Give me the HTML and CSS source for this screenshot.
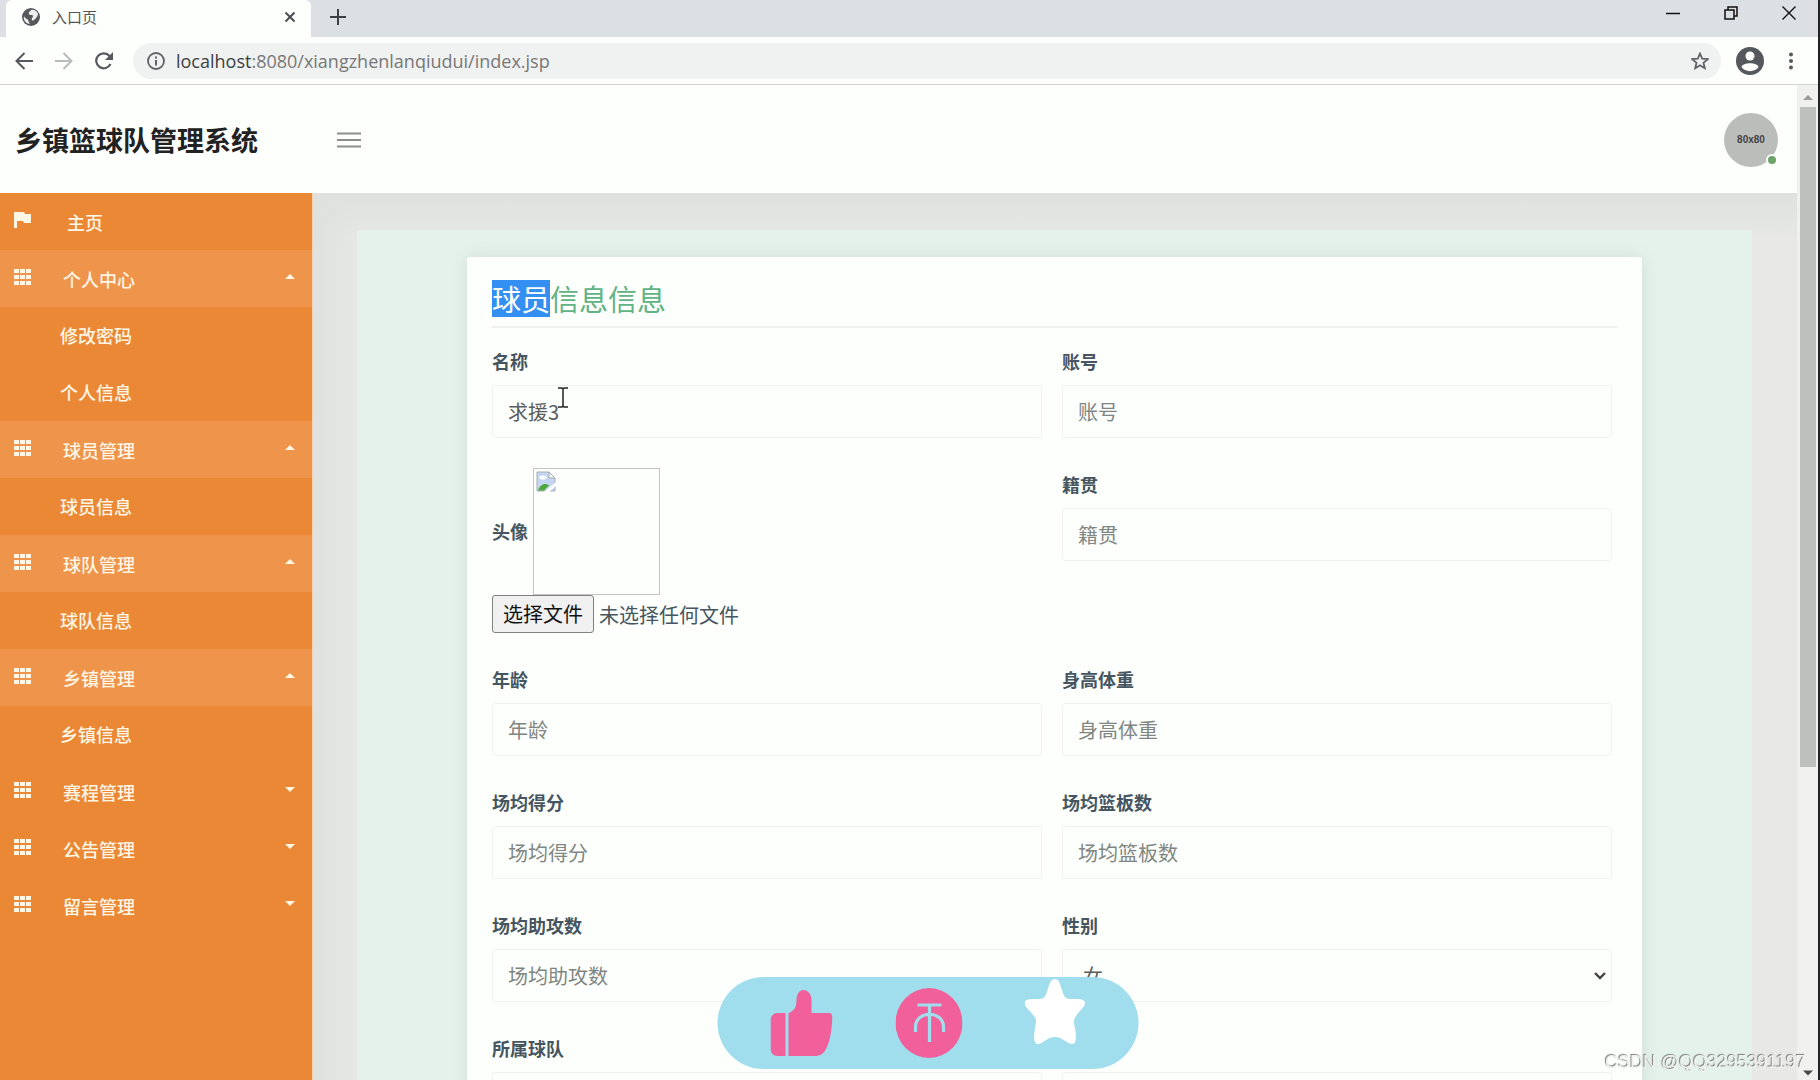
FILE: index.html
```html
<!DOCTYPE html>
<html lang="zh-CN">
<head>
<meta charset="utf-8">
<title>入口页</title>
<link rel="stylesheet" href="styles.css">
</head>
<body>
<svg class="defs" aria-hidden="true">
  <symbol id="grid" viewBox="0 0 17 16"><path d="M0 0h5v4H0zM6 0h5v4H6zM12 0h5v4h-5zM0 6h5v4H0zM6 6h5v4H6zM12 6h5v4h-5zM0 12h5v4H0zM6 12h5v4H6zM12 12h5v4h-5z"/></symbol>
  <symbol id="up" viewBox="0 0 10 5"><path d="M0 5 5 0l5 5z"/></symbol>
  <symbol id="down" viewBox="0 0 10 5"><path d="M0 0h10L5 5z"/></symbol>
</svg>

<div class="tabstrip">
  <div class="tab">
    <svg class="globe" viewBox="0 0 18 18"><circle cx="9" cy="9" r="9" fill="#55595d"/><path d="M2 8c1 3 3 2 4 4s1 3 2 4c-4 0-7-4-6-8zM9 2c-1 2-3 2-2 4s4 0 4 2-2 2-1 4 3-1 4-2 2-3 2-4c-1-3-4-5-7-4z" fill="#eceeef"/></svg>
    <span class="tab-title">入口页</span>
    <button class="icon-btn" aria-label="关闭标签页"><svg width="12" height="12" viewBox="0 0 12 12"><path d="M1.500 1.500l9 9m0-9l-9 9" stroke="#4a4d50" stroke-width="2"/></svg></button>
  </div>
  <button class="icon-btn new-tab" aria-label="新标签页"><svg width="16" height="16" viewBox="0 0 16 16"><path d="M8 0v16M0 8h16" stroke="#3c4043" stroke-width="2"/></svg></button>
  <div class="window-btns">
    <button class="icon-btn" aria-label="最小化"><svg width="14" height="14" viewBox="0 0 14 14"><path d="M0 7.500h14" stroke="#111" stroke-width="1.500"/></svg></button>
    <button class="icon-btn" aria-label="还原"><svg width="14" height="14" viewBox="0 0 14 14" fill="none" stroke="#111" stroke-width="1.500"><path d="M1 4h9v9H1zM4 4V1h9v9h-3"/></svg></button>
    <button class="icon-btn" aria-label="关闭"><svg width="14" height="14" viewBox="0 0 14 14"><path d="M.500.500l13 13m0-13l-13 13" stroke="#111" stroke-width="1.400"/></svg></button>
  </div>
</div>

<div class="toolbar">
  <div class="nav-btns">
    <button class="icon-btn" aria-label="后退"><svg width="18" height="18" viewBox="0 0 18 18" fill="none" stroke="#55595d" stroke-width="2"><path d="M18 9H2M9.500 1 1.500 9l8 8"/></svg></button>
    <button class="icon-btn" aria-label="前进"><svg width="18" height="18" viewBox="0 0 18 18" fill="none" stroke="#b9bbbd" stroke-width="2"><path d="M0 9h16M8.500 1l8 8-8 8"/></svg></button>
    <button class="icon-btn" aria-label="刷新"><svg width="18" height="18" viewBox="0 0 18 18"><path d="M15.500 12A7.500 7.500 0 1 1 14.500 4" fill="none" stroke="#55595d" stroke-width="2.200"/><path d="M18 0v8h-8z" fill="#55595d"/></svg></button>
  </div>
  <div class="omnibox">
    <svg width="18" height="18" viewBox="0 0 18 18"><circle cx="9" cy="9" r="8" fill="none" stroke="#5f6368" stroke-width="1.800"/><path d="M9 8v5.500M9 4.500v2" stroke="#5f6368" stroke-width="2"/></svg>
    <span class="url"><b>localhost</b>:8080/xiangzhenlanqiudui/index.jsp</span>
    <svg width="18" height="18" viewBox="0 0 24 24"><path d="M12 2l2.900 6.900 7.500.600-5.700 4.900 1.700 7.300L12 17.800l-6.400 3.900 1.700-7.300L1.600 9.500l7.500-.600z" fill="none" stroke="#5f6368" stroke-width="2.400"/></svg>
  </div>
  <svg width="28" height="28" viewBox="0 0 28 28"><circle cx="14" cy="14" r="14" fill="#55595d"/><circle cx="14" cy="9" r="4.500" fill="#fff"/><path d="M5.500 20c1-5 16-5 17 0-3 5.500-14 5.500-17 0z" fill="#fff"/></svg>
  <svg class="dots" width="4" height="18" viewBox="0 0 4 18" fill="#55595d"><circle cx="2" cy="2.500" r="2"/><circle cx="2" cy="9" r="2"/><circle cx="2" cy="15.500" r="2"/></svg>
</div>

<div class="viewport">
  <div class="page">
    <header class="header">
      <h1 class="brand">乡镇篮球队管理系统</h1>
      <button class="icon-btn" aria-label="菜单"><svg width="24" height="18" viewBox="0 0 24 18"><path d="M0 2.500h24M0 9h24M0 15.500h24" stroke="#8b8d8b" stroke-width="2.200"/></svg></button>
      <div class="avatar">80x80</div>
    </header>
    <div class="body">
      <nav class="sidebar">
        <a class="item home" href="#"><svg width="17" height="16" viewBox="0 0 17 16"><path d="M0 0h10l1 2h6v9h-7l-1-2H3v7H0z"/></svg><span>主页</span></a>
        <a class="item open" href="#"><svg width="17" height="16"><use href="#grid"/></svg><span>个人中心</span><svg width="10" height="5"><use href="#up"/></svg></a>
        <a class="sub" href="#">修改密码</a>
        <a class="sub" href="#">个人信息</a>
        <a class="item open" href="#"><svg width="17" height="16"><use href="#grid"/></svg><span>球员管理</span><svg width="10" height="5"><use href="#up"/></svg></a>
        <a class="sub" href="#">球员信息</a>
        <a class="item open" href="#"><svg width="17" height="16"><use href="#grid"/></svg><span>球队管理</span><svg width="10" height="5"><use href="#up"/></svg></a>
        <a class="sub" href="#">球队信息</a>
        <a class="item open" href="#"><svg width="17" height="16"><use href="#grid"/></svg><span>乡镇管理</span><svg width="10" height="5"><use href="#up"/></svg></a>
        <a class="sub" href="#">乡镇信息</a>
        <a class="item" href="#"><svg width="17" height="16"><use href="#grid"/></svg><span>赛程管理</span><svg width="10" height="5"><use href="#down"/></svg></a>
        <a class="item" href="#"><svg width="17" height="16"><use href="#grid"/></svg><span>公告管理</span><svg width="10" height="5"><use href="#down"/></svg></a>
        <a class="item" href="#"><svg width="17" height="16"><use href="#grid"/></svg><span>留言管理</span><svg width="10" height="5"><use href="#down"/></svg></a>
      </nav>
      <main class="main">
        <div class="panel">
          <section class="card">
            <h2 class="card-title"><mark>球员</mark>信息信息</h2>
            <form class="form">
              <div class="field"><label for="name">名称</label>
                <div class="control"><input class="box" id="name" type="text" value="求援3"><svg class="ibeam" width="10" height="21" viewBox="0 0 10 21"><path d="M0 1h4l1 1 1-1h4M5 2v17M0 20h4l1-1 1 1h4" fill="none" stroke="#222" stroke-width="1.500"/></svg></div></div>
              <div class="field"><label for="account">账号</label><input class="box" id="account" type="text" placeholder="账号"></div>
              <div class="photo">
                <div class="photo-row"><label for="file">头像</label>
                  <div class="thumb"><svg width="20" height="21" viewBox="0 0 20 21"><path d="M1 1h12l6 6v13H1z" fill="#c5d6f3" stroke="#a9adb1"/><path d="M13 1v6h6z" fill="#f6f6f6" stroke="#a9adb1"/><ellipse cx="7" cy="6.500" rx="3.500" ry="2" fill="#fff"/><path d="M2 19.500c2-6 7-8 11-5l-5 5z" fill="#4fa63a"/><path d="M8 21 20 11v4l-7 6z" fill="#fff"/></svg></div></div>
                <div class="file-row"><input id="file" type="file" hidden><button class="file-btn" type="button" onclick="document.getElementById('file').click()">选择文件</button><span>未选择任何文件</span></div>
              </div>
              <div class="field"><label for="origin">籍贯</label><input class="box" id="origin" type="text" placeholder="籍贯"></div>
              <div class="field"><label for="age">年龄</label><input class="box" id="age" type="text" placeholder="年龄"></div>
              <div class="field"><label for="body">身高体重</label><input class="box" id="body" type="text" placeholder="身高体重"></div>
              <div class="field"><label for="points">场均得分</label><input class="box" id="points" type="text" placeholder="场均得分"></div>
              <div class="field"><label for="rebounds">场均篮板数</label><input class="box" id="rebounds" type="text" placeholder="场均篮板数"></div>
              <div class="field"><label for="assists">场均助攻数</label><input class="box" id="assists" type="text" placeholder="场均助攻数"></div>
              <div class="field"><label for="sex">性别</label>
                <div class="control"><select class="box" id="sex"><option>女</option><option>男</option></select><svg class="chevron" width="12" height="8" viewBox="0 0 12 8"><path d="M1 1l5 5 5-5" fill="none" stroke="#444" stroke-width="2.400"/></svg></div></div>
              <div class="field"><label for="team">所属球队</label><input class="box" id="team" type="text"></div>
              <div class="field"><label for="extra"></label><input class="box" id="extra" type="text"></div>
            </form>
          </section>
        </div>
      </main>
    </div>
  </div>
  <div class="scrollbar">
    <svg width="10" height="5" fill="#9a9c9a"><use href="#up"/></svg>
    <div class="scroll-track"><div class="scroll-thumb"></div></div>
    <svg width="10" height="6" fill="#4a4a4a"><use href="#down"/></svg>
  </div>
</div>

<div class="actions">
  <svg width="62" height="66" viewBox="0 0 62 66" fill="#f1609a"><path d="M7 23h8v43H7c-4 0-7-3-7-7V31c0-5 3-8 7-8z"/><path d="M18 23c6-2 8-6 8-13 0-6 3-10 7-10s8 4 8 10v13h17c3 0 4 2 4 5-1 12-2 22-6 30-3 6-6 8-12 8H18z"/></svg>
  <svg width="67" height="70" viewBox="0 0 67 70"><ellipse cx="33.500" cy="35" rx="33.500" ry="35" fill="#f1609a"/><path d="M22 17h24M34 17v37M20 44v-5c0-17 28-17 28 0v5" fill="none" stroke="#a0deed" stroke-width="3.200"/></svg>
  <svg class="star" width="61" height="66" viewBox="0 0 61 66"><path d="M30.500 0c4 0 5 5 7 11s3 9 8 9c6 0 15-1 15 4 0 4-6 8-9 13-3 4-2 7-1 12 1 6 2 15-2 16-5 1-10-7-18-7s-13 8-18 7c-4-1-3-10-2-16 1-5 2-8-1-12C6 32 0 28 0 24c0-5 9-4 15-4 5 0 6-3 8-9s3-11 7.500-11z" fill="#fff"/></svg>
</div>
<div class="watermark">CSDN @QQ3295391197</div>
</body>
</html>
```
FILE: styles.css
```css
*, *::after { box-sizing: border-box; }
body {
  margin: 0;
  height: 100vh;
  display: flex;
  flex-direction: column;
  overflow: hidden;
  border-right: 2px solid #222;
  background: #fdfffc;
  font-family: "Noto Sans CJK SC", sans-serif;
}
svg { flex: none; display: block; }
a { color: inherit; text-decoration: none; }
.defs { position: absolute; width: 0; height: 0; }
.icon-btn { border: 0; padding: 0; background: none; display: flex; }

/* Browser chrome */
.tabstrip { flex: none; height: 37px; display: flex; background: #dcdfe3; padding-left: 6px; }
.tab {
  width: 305px;
  display: flex;
  align-items: center;
  gap: 12px;
  padding: 0 15px 4px 16px;
  background: #fdfffc;
  border-radius: 6px 6px 0 0;
}
.globe { width: 18px; height: 18px; }
.tab-title { flex: 1; font-size: 15px; line-height: 24px; color: #555; }
.new-tab { padding: 9px 19px; }
.window-btns { margin-left: auto; display: flex; gap: 44px; padding: 6px 22px 0 0; }
.toolbar {
  flex: none;
  height: 48px;
  display: flex;
  align-items: center;
  gap: 15px;
  padding: 0 25px 0 15px;
  border-bottom: 1px solid #d3d5d3;
}
.nav-btns { display: flex; gap: 22px; margin-right: 5px; }
.omnibox {
  flex: 1;
  height: 36px;
  display: flex;
  align-items: center;
  gap: 11px;
  padding: 0 12px 0 14px;
  border-radius: 18px;
  background: #f0f2f1;
}
.url { flex: 1; font-family: "Open Sans", sans-serif; font-size: 18px; color: #777; }
.url b { font-weight: 400; color: #3c4043; }
.dots { margin-left: 10px; }

/* Page frame */
.viewport { flex: 1; min-height: 0; display: flex; }
.page { flex: 1; min-width: 0; display: flex; flex-direction: column; }
.header { flex: none; height: 108px; display: flex; align-items: center; padding: 1px 19px 0 15px; }
.brand { width: 322px; margin: 0; font-size: 27px; line-height: 40px; font-weight: 700; color: #222; }
.avatar {
  position: relative;
  width: 54px;
  height: 54px;
  margin-left: auto;
  border-radius: 50%;
  background: #bbbdbb;
  color: #444;
  font: 700 10px/54px "Liberation Sans", sans-serif;
  text-align: center;
}
.avatar::after {
  content: "";
  position: absolute;
  right: 0;
  bottom: 1px;
  width: 12px;
  height: 12px;
  border: 2px solid #fdfffc;
  border-radius: 50%;
  background: #6ca368;
}
.body { flex: 1; min-height: 0; display: flex; overflow: hidden; }
.sidebar {
  flex: none;
  width: 313px;
  border-right: 1px solid #f3d3b4;
  background: #ea8836;
  color: #fff6e4;
  fill: #fff6e4;
  font-size: 18px;
  font-weight: 500;
  line-height: 56px;
}
.item { height: 57px; display: flex; align-items: center; padding: 0 17px 0 14px; }
.item span { flex: 1; padding: 1px 0 0 32px; }
.home span { padding-left: 36px; }
.item svg { margin-bottom: 4px; }
.open { background: #ee944b; }
.sub { display: block; height: 57px; padding-left: 60px; }
.main {
  flex: 1;
  min-width: 0;
  padding: 37px 45px 0 44px;
  background:
    linear-gradient(to bottom, #dfe1df, #dfe1df00 50px),
    linear-gradient(to right, #dfe1df, #dfe1df00 50px),
    #e8e9e7;
}
.panel { padding: 27px 110px; background: #e5f2eb; min-height: 100%; }

/* Form card */
.card {
  padding: 23px 25px;
  background: #fdfffc;
  border-radius: 3px;
  box-shadow: 0 0 18px rgba(60, 90, 75, .12);
}
.card-title {
  margin: 0 0 17px;
  padding-bottom: 9px;
  border-bottom: 2px solid #eef0ee;
  font-size: 29px;
  line-height: 37px;
  font-weight: 400;
  color: #60b384;
}
.card-title mark { display: inline-block; background: #338ff2; color: #fdfffc; }
.form {
  display: grid;
  grid-template-columns: 1fr 1fr;
  gap: 30px 20px;
  padding-right: 5px;
  color: #465560;
  font-size: 20px;
}
.field { display: flex; flex-direction: column; gap: 10px; padding-top: 3px; }
label { height: 27px; font-size: 18px; line-height: 27px; font-weight: 700; }
.control { position: relative; }
.box {
  width: 100%;
  height: 53px;
  padding: 0 15px;
  border: 1px solid #eff2ef;
  border-radius: 3px;
  background: #fdfffc;
  font: 400 20px/30px "Noto Sans CJK SC", sans-serif;
  color: #5a5d60;
  appearance: none;
}
select.box { padding-left: 20px; }
.box::placeholder { color: #808682; opacity: 1; }
.ibeam { position: absolute; left: 66px; top: 2px; }
.chevron { position: absolute; right: 6px; top: 23px; }
.photo-row { display: flex; align-items: center; gap: 5px; }
.thumb { width: 127px; height: 127px; padding: 2px; border: 1px solid #c3c5c3; }
.file-row { display: flex; align-items: center; gap: 5px; height: 38px; }
.file-btn {
  width: 102px;
  height: 38px;
  padding: 0;
  border: 1px solid #808280;
  border-radius: 3px;
  background: #eff0ef;
  color: #111;
  font: 400 20px/30px "Noto Sans CJK SC", sans-serif;
}

/* Scroll bar */
.scrollbar {
  flex: none;
  width: 21px;
  display: flex;
  flex-direction: column;
  align-items: center;
  padding: 10px 0 4px;
  background: #f0f1ef;
}
.scroll-track { flex: 1; width: 16px; padding: 7px 0; }
.scroll-thumb { height: 69%; background: #bec0bd; }

/* Overlays */
.actions {
  position: fixed;
  left: 51%;
  bottom: 11px;
  transform: translateX(-50%);
  width: 421px;
  height: 92px;
  display: flex;
  align-items: center;
  justify-content: space-between;
  padding: 0 53px;
  border-radius: 46px;
  background: #a0deed;
}
.star { align-self: flex-start; margin-top: 2px; }
.watermark {
  position: fixed;
  right: 14px;
  bottom: 7px;
  font: 18px/22px "Liberation Sans", sans-serif;
  color: #f0f2f0;
  text-shadow: -1px -1px 1px #777;
}
```
